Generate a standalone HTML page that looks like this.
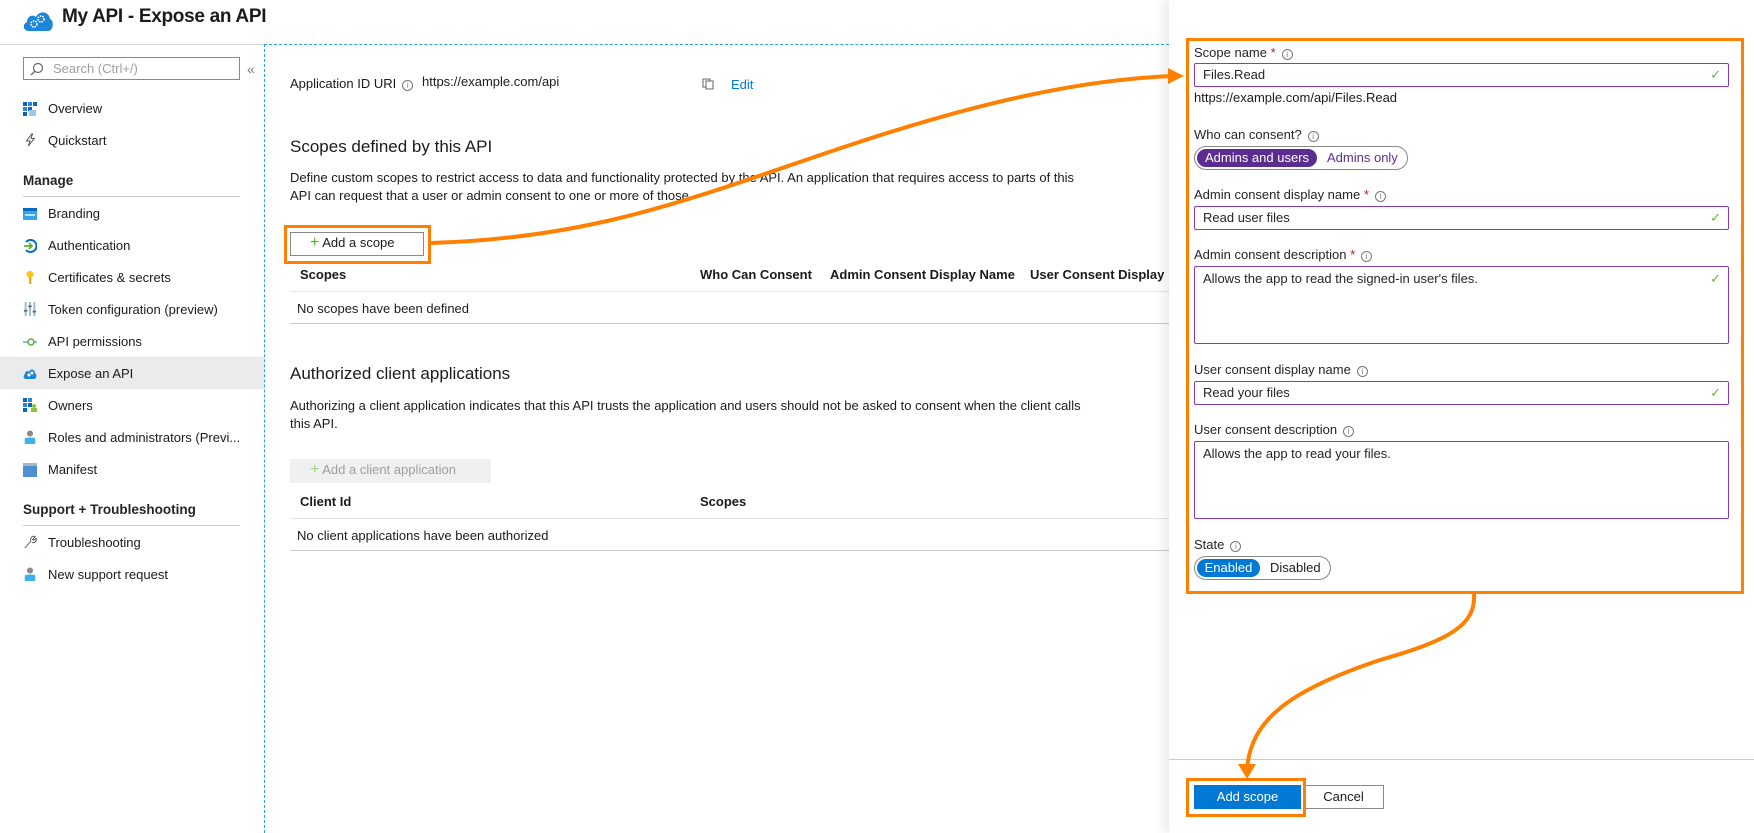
<!DOCTYPE html>
<html><head><meta charset="utf-8"><style>
*{margin:0;padding:0;box-sizing:border-box}
body{width:1754px;height:833px;overflow:hidden;background:#fff;font-family:"Liberation Sans",sans-serif;font-size:13px;color:#1b1b1b;position:relative}
.a{position:absolute;white-space:nowrap}
.mi{position:absolute;left:48px;font-size:13px;line-height:16px}
.ic{position:absolute;left:23px;width:14px;height:14px}
.sec{position:absolute;left:23px;font-size:13.5px;font-weight:bold;color:#252525}
.hl{position:absolute;height:1px;background:#d6d6d6}
.lbl{position:absolute;left:1194px;font-size:13px;line-height:16px;color:#252525}
.lbl b{color:#a4262c;font-weight:normal}
.info{display:inline-block;width:11px;height:11px;border:1px solid #777;border-radius:50%;font-size:8px;line-height:9px;text-align:center;color:#777;margin-left:6px;vertical-align:0}
.inp{position:absolute;left:1194px;width:535px;border:1px solid #8a3ab9;border-radius:2px;padding:0 8px;font-size:13px;line-height:22px;color:#252525}
.chk{position:absolute;right:7px;top:0;color:#5fb832;font-size:13px}
</style></head><body>

<!-- header -->
<svg class="a" style="left:22px;top:9px" width="32" height="24" viewBox="0 0 32 24"><path d="M7 22 C1 22 0 15 5 13 C5 7 11 5 14 8 C17 1 27 2 28 10 C32 11 32 22 26 22 Z" fill="#1e86d8"/><circle cx="12" cy="15" r="3" fill="none" stroke="#fff" stroke-width="1.6" stroke-dasharray="1.5 1"/><circle cx="19" cy="10" r="3" fill="none" stroke="#fff" stroke-width="1.6" stroke-dasharray="1.5 1"/></svg>
<div class="a" style="left:62px;top:6px;font-size:19px;font-weight:bold;color:#1b1b1b;letter-spacing:-0.3px">My API - Expose an API</div>
<div class="hl" style="left:0;top:44px;width:264px"></div>
<div class="a" style="left:264px;top:44px;width:905px;border-top:1px dashed #2aa5dd"></div>
<div class="a" style="left:264px;top:44px;height:789px;border-left:1px dashed #2aa5dd"></div>

<!-- sidebar -->
<div class="a" style="left:23px;top:57px;width:217px;height:23px;border:1px solid #8a8886"></div>
<svg class="a" style="left:30px;top:62px" width="14" height="14"><circle cx="8" cy="6" r="4.5" fill="none" stroke="#666" stroke-width="1.2"/><line x1="5" y1="9" x2="1" y2="13" stroke="#666" stroke-width="1.3"/></svg>
<div class="a" style="left:53px;top:61px;color:#a19f9d;font-size:13px">Search (Ctrl+/)</div>
<div class="a" style="left:247px;top:61px;color:#777;font-size:14px">«</div>

<svg class="ic" style="top:102px" viewBox="0 0 14 14"><rect x="0" y="0" width="4" height="4" fill="#0a62c2"/><rect x="5" y="0" width="4" height="4" fill="#2c83da"/><rect x="10" y="0" width="4" height="4" fill="#0a62c2"/><rect x="0" y="5" width="4" height="4" fill="#2c83da"/><rect x="5" y="5" width="4" height="4" fill="#0a62c2"/><rect x="0" y="10" width="4" height="4" fill="#0a62c2"/><rect x="6" y="8" width="7" height="6" fill="#9bc7ef"/></svg>
<div class="mi" style="top:101px">Overview</div>
<svg class="ic" style="top:133px" viewBox="0 0 14 16"><path d="M9 1 L3 9 H7 L5 15 L12 6 H8 L10 1 Z" fill="none" stroke="#444" stroke-width="1"/></svg>
<div class="mi" style="top:133px">Quickstart</div>
<div class="sec" style="top:173px">Manage</div>
<div class="hl" style="left:23px;top:196px;width:217px;background:#ccc"></div>
<svg class="ic" style="top:207px" viewBox="0 0 14 14"><rect x="0" y="1" width="14" height="12" fill="#36a3e6"/><rect x="0" y="1" width="14" height="3" fill="#0a6bc2"/><rect x="2" y="7" width="10" height="2" fill="#bfe3f7"/></svg>
<div class="mi" style="top:206px">Branding</div>
<svg class="ic" style="top:239px" viewBox="0 0 14 14"><path d="M3 3 A6 6 0 1 1 3 11" fill="none" stroke="#0a6bc2" stroke-width="2"/><path d="M1 7 H9 M6 4 L9 7 L6 10" fill="none" stroke="#5bb02e" stroke-width="1.8"/></svg>
<div class="mi" style="top:238px">Authentication</div>
<svg class="ic" style="top:270px" viewBox="0 0 14 16"><circle cx="7" cy="5" r="4" fill="#ffc412"/><rect x="6" y="8" width="2.5" height="8" fill="#f2a900"/></svg>
<div class="mi" style="top:270px">Certificates &amp; secrets</div>
<svg class="ic" style="top:302px" viewBox="0 0 14 16"><rect x="1" y="0" width="2" height="16" fill="#8fb3d6"/><rect x="6" y="0" width="2" height="16" fill="#8fb3d6"/><rect x="11" y="0" width="2" height="16" fill="#8fb3d6"/><rect x="0" y="9" width="4" height="2" fill="#666"/><rect x="5" y="4" width="4" height="2" fill="#666"/><rect x="10" y="10" width="4" height="2" fill="#666"/></svg>
<div class="mi" style="top:302px">Token configuration (preview)</div>
<svg class="ic" style="top:335px" viewBox="0 0 14 14"><line x1="0" y1="7" x2="14" y2="7" stroke="#3aa0d8" stroke-width="1.3"/><circle cx="8" cy="7" r="3" fill="#fff" stroke="#5bb02e" stroke-width="1.5"/></svg>
<div class="mi" style="top:334px">API permissions</div>
<div class="a" style="left:0;top:357px;width:264px;height:32px;background:#ebebeb"></div>
<svg class="ic" style="top:367px" viewBox="0 0 14 12"><path d="M3 11 C0 11 0 7 2 6 C2 3 5 2 6 4 C7 0 12 1 12 5 C14 6 14 11 11 11Z" fill="#1e86d8"/><circle cx="6" cy="7" r="1.5" fill="#fff"/><circle cx="9" cy="5" r="1.5" fill="#fff"/></svg>
<div class="mi" style="top:366px">Expose an API</div>
<svg class="ic" style="top:398px" viewBox="0 0 14 14"><rect x="0" y="0" width="4" height="4" fill="#0a62c2"/><rect x="5" y="0" width="4" height="4" fill="#2c83da"/><rect x="0" y="5" width="4" height="4" fill="#2c83da"/><rect x="5" y="5" width="4" height="4" fill="#0a62c2"/><rect x="0" y="10" width="4" height="4" fill="#0a62c2"/><circle cx="11" cy="8" r="2" fill="#8cc63f"/><rect x="8" y="10" width="6" height="4" fill="#8cc63f"/></svg>
<div class="mi" style="top:398px">Owners</div>
<svg class="ic" style="top:430px" viewBox="0 0 14 16"><circle cx="7" cy="4" r="3.5" fill="#8a8a8a"/><path d="M1 16 V10 C1 8 13 8 13 10 V16Z" fill="#3fb0e8"/></svg>
<div class="mi" style="top:430px">Roles and administrators (Previ...</div>
<svg class="ic" style="top:463px" viewBox="0 0 14 14"><rect x="0" y="0" width="14" height="14" fill="#4d8fd1"/><rect x="0" y="0" width="14" height="3" fill="#a0b8d0"/></svg>
<div class="mi" style="top:462px">Manifest</div>
<div class="sec" style="top:502px">Support + Troubleshooting</div>
<div class="hl" style="left:23px;top:525px;width:217px;background:#ccc"></div>
<svg class="ic" style="top:535px" viewBox="0 0 14 16"><path d="M1 15 L8 7 M8 7 C7 3 10 0 13 2 L10 5 L11 6 L14 4 C15 8 11 10 9 8" fill="none" stroke="#444" stroke-width="1"/></svg>
<div class="mi" style="top:535px">Troubleshooting</div>
<svg class="ic" style="top:567px" viewBox="0 0 14 16"><circle cx="7" cy="4" r="3.5" fill="#8a8a8a"/><path d="M1 16 V10 C1 8 13 8 13 10 V16Z" fill="#3fb0e8"/></svg>
<div class="mi" style="top:567px">New support request</div>

<!-- main -->
<div class="a" style="left:290px;top:76px">Application ID URI<span class="info">i</span></div>
<div class="a" style="left:422px;top:74px">https://example.com/api</div>
<svg class="a" style="left:702px;top:78px" width="12" height="12"><rect x="1" y="1" width="7" height="8" fill="none" stroke="#666"/><rect x="4" y="3" width="7" height="8" fill="#fff" stroke="#666"/></svg>
<div class="a" style="left:731px;top:77px;color:#0078d4">Edit</div>

<div class="a" style="left:290px;top:137px;font-size:17px">Scopes defined by this API</div>
<div class="a" style="left:290px;top:169px;line-height:18px">Define custom scopes to restrict access to data and functionality protected by the API. An application that requires access to parts of this<br>API can request that a user or admin consent to one or more of those.</div>
<div class="a" style="left:290px;top:232px;width:134px;height:24px;border:1px solid #8a8886;background:#fff"></div>
<div class="a" style="left:310px;top:235px;font-size:13px"><span style="color:#5bb02e;font-size:16px;line-height:16px">+</span> Add a scope</div>
<div class="a" style="left:284px;top:225px;width:147px;height:39px;border:3px solid #ff8000"></div>
<div class="a" style="left:300px;top:267px;font-weight:bold;font-size:13px">Scopes</div>
<div class="a" style="left:700px;top:267px;font-weight:bold">Who Can Consent</div>
<div class="a" style="left:830px;top:267px;font-weight:bold">Admin Consent Display Name</div>
<div class="a" style="left:1030px;top:267px;font-weight:bold;width:138px;overflow:hidden">User Consent Display Name</div>
<div class="hl" style="left:290px;top:291px;width:879px;background:#e4e4e4"></div>
<div class="a" style="left:297px;top:301px">No scopes have been defined</div>
<div class="hl" style="left:290px;top:323px;width:879px;background:#ccc"></div>

<div class="a" style="left:290px;top:364px;font-size:17px">Authorized client applications</div>
<div class="a" style="left:290px;top:397px;line-height:18px">Authorizing a client application indicates that this API trusts the application and users should not be asked to consent when the client calls<br>this API.</div>
<div class="a" style="left:290px;top:459px;width:201px;height:24px;background:#f0f0f0"></div>
<div class="a" style="left:310px;top:462px;color:#a19f9d"><span style="color:#9fd37f;font-size:16px;line-height:16px">+</span> Add a client application</div>
<div class="a" style="left:300px;top:494px;font-weight:bold">Client Id</div>
<div class="a" style="left:700px;top:494px;font-weight:bold">Scopes</div>
<div class="hl" style="left:290px;top:518px;width:879px;background:#e4e4e4"></div>
<div class="a" style="left:297px;top:528px">No client applications have been authorized</div>
<div class="hl" style="left:290px;top:550px;width:879px;background:#ccc"></div>

<!-- right panel -->
<div class="a" style="left:1169px;top:0;width:585px;height:833px;background:#fff;box-shadow:-6px 0 10px rgba(0,0,0,0.08)"></div>
<div class="lbl" style="top:45px">Scope name <b>*</b><span class="info">i</span></div>
<div class="inp" style="top:63px;height:24px">Files.Read<span class="chk">✓</span></div>
<div class="a" style="left:1194px;top:90px;color:#1b1b1b">https://example.com/api/Files.Read</div>
<div class="lbl" style="top:127px">Who can consent?<span class="info">i</span></div>
<div class="a" style="left:1194px;top:146px;width:214px;height:24px;border:1px solid #8a8886;border-radius:12px"></div>
<div class="a" style="left:1197px;top:149px;width:120px;height:18px;border-radius:9px;background:#5c2d91;color:#fff;line-height:18px;text-align:center">Admins and users</div>
<div class="a" style="left:1327px;top:150px;color:#5c2d91">Admins only</div>
<div class="lbl" style="top:187px">Admin consent display name <b>*</b><span class="info">i</span></div>
<div class="inp" style="top:206px;height:24px">Read user files<span class="chk">✓</span></div>
<div class="lbl" style="top:247px">Admin consent description <b>*</b><span class="info">i</span></div>
<div class="inp" style="top:266px;height:78px;padding-top:4px;line-height:16px">Allows the app to read the signed-in user's files.<span class="chk" style="top:4px">✓</span></div>
<div class="lbl" style="top:362px">User consent display name<span class="info">i</span></div>
<div class="inp" style="top:381px;height:24px">Read your files<span class="chk">✓</span></div>
<div class="lbl" style="top:422px">User consent description<span class="info">i</span></div>
<div class="inp" style="top:441px;height:78px;padding-top:4px;line-height:16px">Allows the app to read your files.</div>
<div class="lbl" style="top:537px">State<span class="info">i</span></div>
<div class="a" style="left:1194px;top:556px;width:137px;height:24px;border:1px solid #8a8886;border-radius:12px"></div>
<div class="a" style="left:1197px;top:559px;width:63px;height:18px;border-radius:9px;background:#0078d4;color:#fff;line-height:18px;text-align:center">Enabled</div>
<div class="a" style="left:1270px;top:560px">Disabled</div>
<div class="a" style="left:1186px;top:38px;width:558px;height:556px;border:3px solid #ff8000"></div>

<div class="hl" style="left:1169px;top:759px;width:585px;background:#ccc"></div>
<div class="a" style="left:1194px;top:785px;width:107px;height:24px;background:#0078d4;color:#fff;text-align:center;line-height:24px">Add scope</div>
<div class="a" style="left:1303px;top:785px;width:81px;height:24px;border:1px solid #8a8886;text-align:center;line-height:22px">Cancel</div>
<div class="a" style="left:1186px;top:778px;width:120px;height:39px;border:3px solid #ff8000"></div>

<svg class="a" style="left:0;top:0" width="1754" height="833">
<path d="M431 243 C600 238 700 195 850 145 C980 102 1080 80 1172 76" fill="none" stroke="#ff8000" stroke-width="4"/>
<path d="M1168 68 L1184 76 L1168 84 Z" fill="#ff8000"/>
<path d="M1474 594 C1476 625 1450 640 1380 660 C1290 690 1250 720 1247 770" fill="none" stroke="#ff8000" stroke-width="4"/>
<path d="M1238 764 L1247 779 L1256 764 Z" fill="#ff8000"/>
</svg>
</body></html>
